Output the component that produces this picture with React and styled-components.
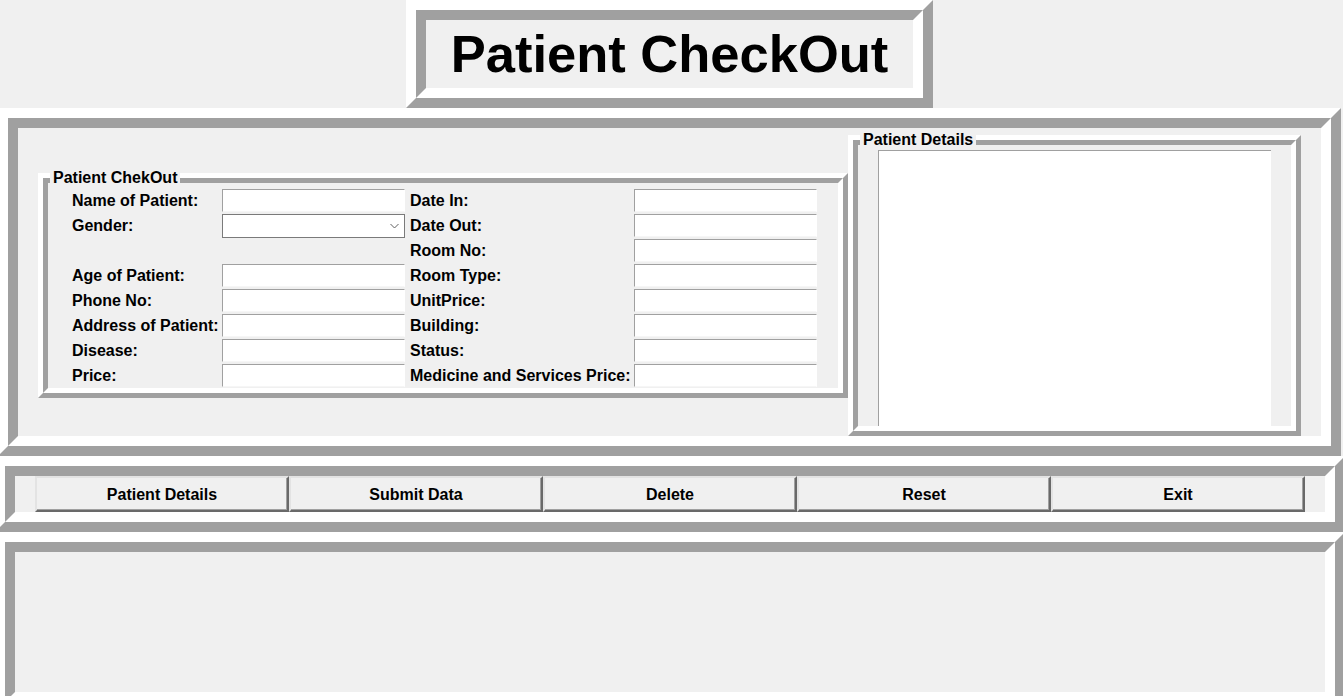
import React from 'react';
import styled, { createGlobalStyle } from 'styled-components';

const GlobalStyle = createGlobalStyle`
  html, body {
    margin: 0;
    padding: 0;
    background: #f0f0f0;
    overflow: hidden;
  }
  * {
    box-sizing: border-box;
  }
`;

const Page = styled.div`
  width: 1343px;
  height: 696px;
  overflow: hidden;
  display: flex;
  flex-direction: column;
  font-family: "Liberation Sans", Arial, sans-serif;
  color: #000000;
`;

// Tk "ridge" relief: two nested bevels
const RidgeOuter = styled.div`
  position: relative;
  display: flex;
  flex-shrink: 0;
  width: ${(p) => p.$w}px;
  height: ${(p) => p.$h}px;
  margin-left: ${(p) => p.$left || 0}px;
  margin-top: ${(p) => p.$top || 0}px;
  border-style: solid;
  border-width: ${(p) => p.$band}px;
  border-color: #ffffff #a0a0a0 #a0a0a0 #ffffff;
`;

const RidgeInner = styled.div`
  flex: 1;
  display: flex;
  flex-direction: ${(p) => p.$dir || 'row'};
  align-items: ${(p) => p.$align || 'stretch'};
  padding: ${(p) => p.$pad || '0'};
  border-style: solid;
  border-width: ${(p) => p.$band}px;
  border-color: #a0a0a0 #ffffff #ffffff #a0a0a0;
  background: #f0f0f0;
`;

const Title = styled.h1`
  margin: 0;
  flex: 1;
  display: flex;
  align-items: center;
  justify-content: center;
  font-size: 52.5px;
  font-weight: bold;
  line-height: 1;
`;

const Legend = styled.div`
  position: absolute;
  top: -9px;
  left: 7px;
  padding: 0 3px;
  background: #f0f0f0;
  font-size: 16px;
  font-weight: bold;
  line-height: 18px;
  white-space: nowrap;
`;

const FormGrid = styled.div`
  display: grid;
  grid-template-columns: 174px 183px 229px 183px;
  grid-auto-rows: 25px;
  align-items: center;
  padding-top: 5px;
  width: 100%;
`;

const FieldLabel = styled.div`
  padding-left: ${(p) => p.$indent}px;
  font-size: 16px;
  font-weight: bold;
  line-height: 18px;
  white-space: nowrap;
`;

const Entry = styled.div`
  height: 23px;
  background: #ffffff;
  border-top: 1px solid #a0a0a0;
  border-left: 1px solid #a0a0a0;
  border-right: 1px solid #ffffff;
  border-bottom: 1px solid #f6f6f6;
`;

const Combo = styled.div`
  height: 24px;
  background: #ffffff;
  border: 1px solid #7a7a7a;
  display: flex;
  align-items: center;
  justify-content: flex-end;
  padding-right: 5px;
`;

const Empty = styled.div``;

const Listbox = styled.div`
  flex: 1;
  margin: 5px 20px 0;
  background: #ffffff;
  border-top: 1px solid #a0a0a0;
  border-left: 1px solid #a0a0a0;
`;

const Button = styled.button`
  width: 254px;
  height: 36px;
  margin: 0;
  padding: 1px 0 0;
  background: #f0f0f0;
  border-style: solid;
  border-width: 2px;
  border-color: #e3e3e3 #696969 #696969 #e3e3e3;
  box-shadow: inset -1px -1px 0 #a0a0a0;
  font-family: "Liberation Sans", Arial, sans-serif;
  font-size: 16px;
  font-weight: bold;
  color: #000000;
`;

const Chevron = () => (
  <svg width="9" height="6" viewBox="0 0 9 6">
    <polyline points="0.5,1 4.5,5 8.5,1" fill="none" stroke="#606060" strokeWidth="1" />
  </svg>
);

const leftFields = [
  'Name of Patient:',
  'Gender:',
  '',
  'Age of Patient:',
  'Phone No:',
  'Address of Patient:',
  'Disease:',
  'Price:',
];

const rightFields = [
  'Date In:',
  'Date Out:',
  'Room No:',
  'Room Type:',
  'UnitPrice:',
  'Building:',
  'Status:',
  'Medicine and Services Price:',
];

const buttons = ['Patient Details', 'Submit Data', 'Delete', 'Reset', 'Exit'];

export default function App() {
  return (
    <Page>
      <GlobalStyle />

      <RidgeOuter $band={10} $w={527} $h={108} $left={406}>
        <RidgeInner $band={10}>
          <Title>Patient CheckOut</Title>
        </RidgeInner>
      </RidgeOuter>

      <RidgeOuter $band={10} $w={1343} $h={348} $left={-2}>
        <RidgeInner $band={10} $pad="0 20px" $align="flex-start">
          <RidgeOuter $band={5} $w={810} $h={225} $top={45}>
            <Legend>Patient ChekOut</Legend>
            <RidgeInner $band={5}>
              <FormGrid>
                {leftFields.map((label, i) => (
                  <React.Fragment key={i}>
                    <FieldLabel $indent={24}>{label}</FieldLabel>
                    {i === 1 ? (
                      <Combo><Chevron /></Combo>
                    ) : i === 2 ? (
                      <Empty />
                    ) : (
                      <Entry />
                    )}
                    <FieldLabel $indent={5}>{rightFields[i]}</FieldLabel>
                    <Entry />
                  </React.Fragment>
                ))}
              </FormGrid>
            </RidgeInner>
          </RidgeOuter>

          <RidgeOuter $band={5} $w={453} $h={301} $top={7}>
            <Legend>Patient Details</Legend>
            <RidgeInner $band={5} $dir="column">
              <Listbox />
            </RidgeInner>
          </RidgeOuter>
        </RidgeInner>
      </RidgeOuter>

      <RidgeOuter $band={10} $w={1350} $h={76} $left={-5}>
        <RidgeInner $band={10} $pad="0 20px">
          {buttons.map((b) => (
            <Button key={b}>{b}</Button>
          ))}
        </RidgeInner>
      </RidgeOuter>

      <RidgeOuter $band={10} $w={1350} $h={180} $left={-5}>
        <RidgeInner $band={10} />
      </RidgeOuter>
    </Page>
  );
}
